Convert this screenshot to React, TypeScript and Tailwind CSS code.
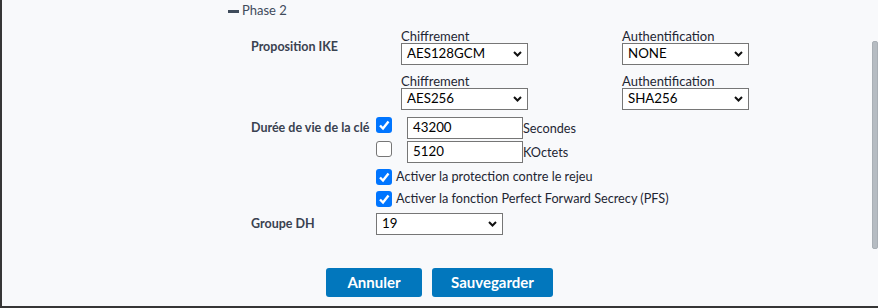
import React from 'react';

const Chevron = () => (
  <svg width="9" height="6" viewBox="0 0 9 6" className="shrink-0">
    <polyline points="1,1 4.5,4.5 8,1" fill="none" stroke="#111" strokeWidth="2" />
  </svg>
);

const Select = ({ value, width }: { value: string; width: string }) => (
  <div className={`${width} h-[22px] bg-white border border-[#767676] flex items-center justify-between pl-[5px] pr-[5px] text-[13.3px] text-black`}>
    <span>{value}</span>
    <Chevron />
  </div>
);

const Checkbox = ({ checked }: { checked: boolean }) =>
  checked ? (
    <div className="w-[16px] h-[16px] rounded-[3px] bg-[#0075ff] flex items-center justify-center shrink-0">
      <svg width="12" height="12" viewBox="0 0 12 12">
        <polyline points="2,6.5 5,9.5 10.5,2.5" fill="none" stroke="white" strokeWidth="2.4" />
      </svg>
    </div>
  ) : (
    <div className="w-[16px] h-[16px] rounded-[3px] bg-white border border-[#767676] shrink-0" />
  );

const Field = ({ label, value }: { label: string; value: string }) => (
  <div className="flex flex-col">
    <div className="h-[14px] leading-[14px] text-[13px] text-[#1e2633]">{label}</div>
    <Select value={value} width="w-[127px]" />
  </div>
);

export default function App() {
  return (
    <div className="relative w-[878px] h-[308px] bg-[#f8f9fb] border-l-2 border-b-2 border-[#363636] overflow-hidden font-['Lato',sans-serif] text-[13px] text-[#1e2633]">
      {/* Phase header */}
      <div className="h-[22px] pl-[226px] flex items-center gap-[3px] text-[#3f4b5b]">
        <div className="w-[11px] h-[3px] bg-[#3f4b5b]" />
        <span className="text-[13px]">Phase 2</span>
      </div>

      <div className="pl-[249px] pt-[7px]">
        {/* Proposition IKE */}
        <div className="flex">
          <div className="w-[125px] pt-[10px] leading-[16px] font-bold text-[12.5px] text-[#3a4250]">Proposition IKE</div>
          <div className="ml-[25px] grid grid-cols-[221px_127px] gap-y-[9px]">
            <Field label="Chiffrement" value="AES128GCM" />
            <Field label="Authentification" value="NONE" />
            <Field label="Chiffrement" value="AES256" />
            <Field label="Authentification" value="SHA256" />
          </div>
        </div>

        {/* Durée de vie */}
        <div className="flex mt-[7px]">
          <div className="w-[125px] pt-[3px] leading-[16px] font-bold text-[12.5px] text-[#3a4250]">Durée de vie de la clé</div>
          <div className="flex flex-col">
            <div className="flex items-start">
              <Checkbox checked />
              <div className="ml-[15px] w-[116px] h-[22px] bg-white border border-[#767676] pl-[5px] flex items-center text-black text-[13.3px]">43200</div>
              <span className="leading-[22px] text-[12.7px]">Secondes</span>
            </div>
            <div className="flex items-start mt-[2px]">
              <Checkbox checked={false} />
              <div className="ml-[15px] w-[116px] h-[22px] bg-white border border-[#767676] pl-[5px] flex items-center text-black text-[13.3px]">5120</div>
              <span className="leading-[22px] text-[12.7px]">KOctets</span>
            </div>
            <div className="flex items-center h-[22px] mt-[3px] gap-[4px]">
              <Checkbox checked />
              <span className="text-[12.7px]">Activer la protection contre le rejeu</span>
            </div>
            <div className="flex items-center h-[22px] gap-[4px]">
              <Checkbox checked />
              <span className="text-[12.7px]">Activer la fonction Perfect Forward Secrecy (PFS)</span>
            </div>
          </div>
        </div>

        {/* Groupe DH */}
        <div className="flex items-center mt-[3px]">
          <div className="w-[125px] leading-[16px] font-bold text-[12.5px] text-[#3a4250]">Groupe DH</div>
          <Select value="19" width="w-[127px]" />
        </div>

        {/* Buttons */}
        <div className="flex gap-[10px] ml-[75px] mt-[33px]">
          <button className="w-[96px] h-[29px] rounded-[3px] bg-[#0277bd] text-white font-bold text-[15px]">Annuler</button>
          <button className="w-[121px] h-[29px] rounded-[3px] bg-[#0277bd] text-white font-bold text-[15px]">Sauvegarder</button>
        </div>
      </div>

      {/* scrollbar */}
      <div className="absolute right-0 top-[41px] w-[6px] h-[208px] rounded-[2px] bg-[#b6bcc2] border border-[#a9afb5]" />
    </div>
  );
}
